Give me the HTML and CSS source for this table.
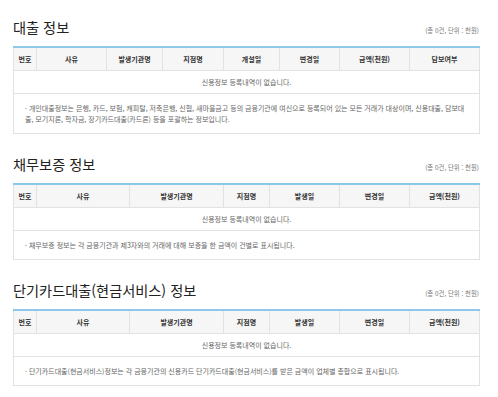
FILE: index.html
```html
<!DOCTYPE html>
<html lang="ko">
<head>
<meta charset="utf-8">
<link rel="stylesheet" href="styles.css">
</head>
<body>
<div class="page">
  <section class="sec sec-loan">
    <div class="sec-head">
      <h2 class="sec-title">대출 정보</h2>
      <span class="unit">(총 0건, 단위 : 천원)</span>
    </div>
    <table class="info">
      <colgroup>
        <col style="width:23px"><col style="width:70px"><col style="width:56px"><col style="width:61px"><col style="width:56px"><col style="width:60px"><col style="width:70px"><col style="width:70px">
      </colgroup>
      <thead>
        <tr><th>번호</th><th>사유</th><th>발생기관명</th><th>지점명</th><th>개설일</th><th>변경일</th><th>금액(천원)</th><th>담보여부</th></tr>
      </thead>
      <tbody>
        <tr class="empty"><td colspan="8">신용정보 등록내역이 없습니다.</td></tr>
        <tr class="note"><td colspan="8">· 개인대출정보는 은행, 카드, 보험, 캐피탈, 저축은행, 신협, 새마을금고 등의 금융기관에 여신으로 등록되어 있는 모든 거래가 대상이며, 신용대출, 담보대<br>출, 모기지론, 학자금, 장기카드대출(카드론) 등을 포괄하는 정보입니다.</td></tr>
      </tbody>
    </table>
  </section>

  <section class="sec">
    <div class="sec-head">
      <h2 class="sec-title">채무보증 정보</h2>
      <span class="unit">(총 0건, 단위 : 천원)</span>
    </div>
    <table class="info">
      <colgroup>
        <col style="width:23px"><col style="width:93px"><col style="width:94px"><col style="width:46px"><col style="width:70px"><col style="width:70px"><col style="width:70px">
      </colgroup>
      <thead>
        <tr><th>번호</th><th>사유</th><th>발생기관명</th><th>지점명</th><th>발생일</th><th>변경일</th><th>금액(천원)</th></tr>
      </thead>
      <tbody>
        <tr class="empty"><td colspan="7">신용정보 등록내역이 없습니다.</td></tr>
        <tr class="note"><td colspan="7">· 채무보증 정보는 각 금융기관과 제3자와의 거래에 대해 보증을 한 금액이 건별로 표시됩니다.</td></tr>
      </tbody>
    </table>
  </section>

  <section class="sec">
    <div class="sec-head">
      <h2 class="sec-title">단기카드대출(현금서비스) 정보</h2>
      <span class="unit">(총 0건, 단위 : 천원)</span>
    </div>
    <table class="info">
      <colgroup>
        <col style="width:23px"><col style="width:93px"><col style="width:94px"><col style="width:46px"><col style="width:70px"><col style="width:70px"><col style="width:70px">
      </colgroup>
      <thead>
        <tr><th>번호</th><th>사유</th><th>발생기관명</th><th>지점명</th><th>발생일</th><th>변경일</th><th>금액(천원)</th></tr>
      </thead>
      <tbody>
        <tr class="empty"><td colspan="7">신용정보 등록내역이 없습니다.</td></tr>
        <tr class="note"><td colspan="7">· 단기카드대출(현금서비스)정보는 각 금융기관의 신용카드 단기카드대출(현금서비스)를 받은 금액이 업체별 총합으로 표시됩니다.</td></tr>
      </tbody>
    </table>
  </section>
</div>
</body>
</html>
```

FILE: styles.css
```css
html, body {
  margin: 0;
  padding: 0;
  background: #ffffff;
}
body {
  font-family: "Noto Sans CJK KR", "Noto Sans", sans-serif;
  color: #555;
}
.page {
  width: 466px;
  padding: 18px 0 0 13px;
  display: flex;
  flex-direction: column;
  gap: 21px;
}
.sec-head {
  display: flex;
  justify-content: space-between;
  align-items: flex-end;
  margin-bottom: 10px;
}
.sec-title {
  margin: 0;
  font-size: 14.2px;
  line-height: 18px;
  font-weight: 400;
  color: #222;
}
.unit {
  font-size: 6.4px;
  line-height: 10px;
  color: #777;
}
.info {
  width: 466px;
  border-collapse: collapse;
  table-layout: fixed;
  border-top: 2px solid #8cc8e8;
  font-size: 7px;
}
.info th {
  height: 22px;
  padding: 0;
  background: #f6f6f6;
  border: 1px solid #e2e2e2;
  border-top: 0;
  color: #333;
  font-weight: 700;
  text-align: center;
}
.info td {
  border: 1px solid #e2e2e2;
  padding: 0;
  color: #666;
}
.empty td {
  height: 22px;
  text-align: center;
}
.note td {
  padding: 9px 8px 8px 11px;
  line-height: 11px;
  text-align: left;
  white-space: nowrap;
}
```
